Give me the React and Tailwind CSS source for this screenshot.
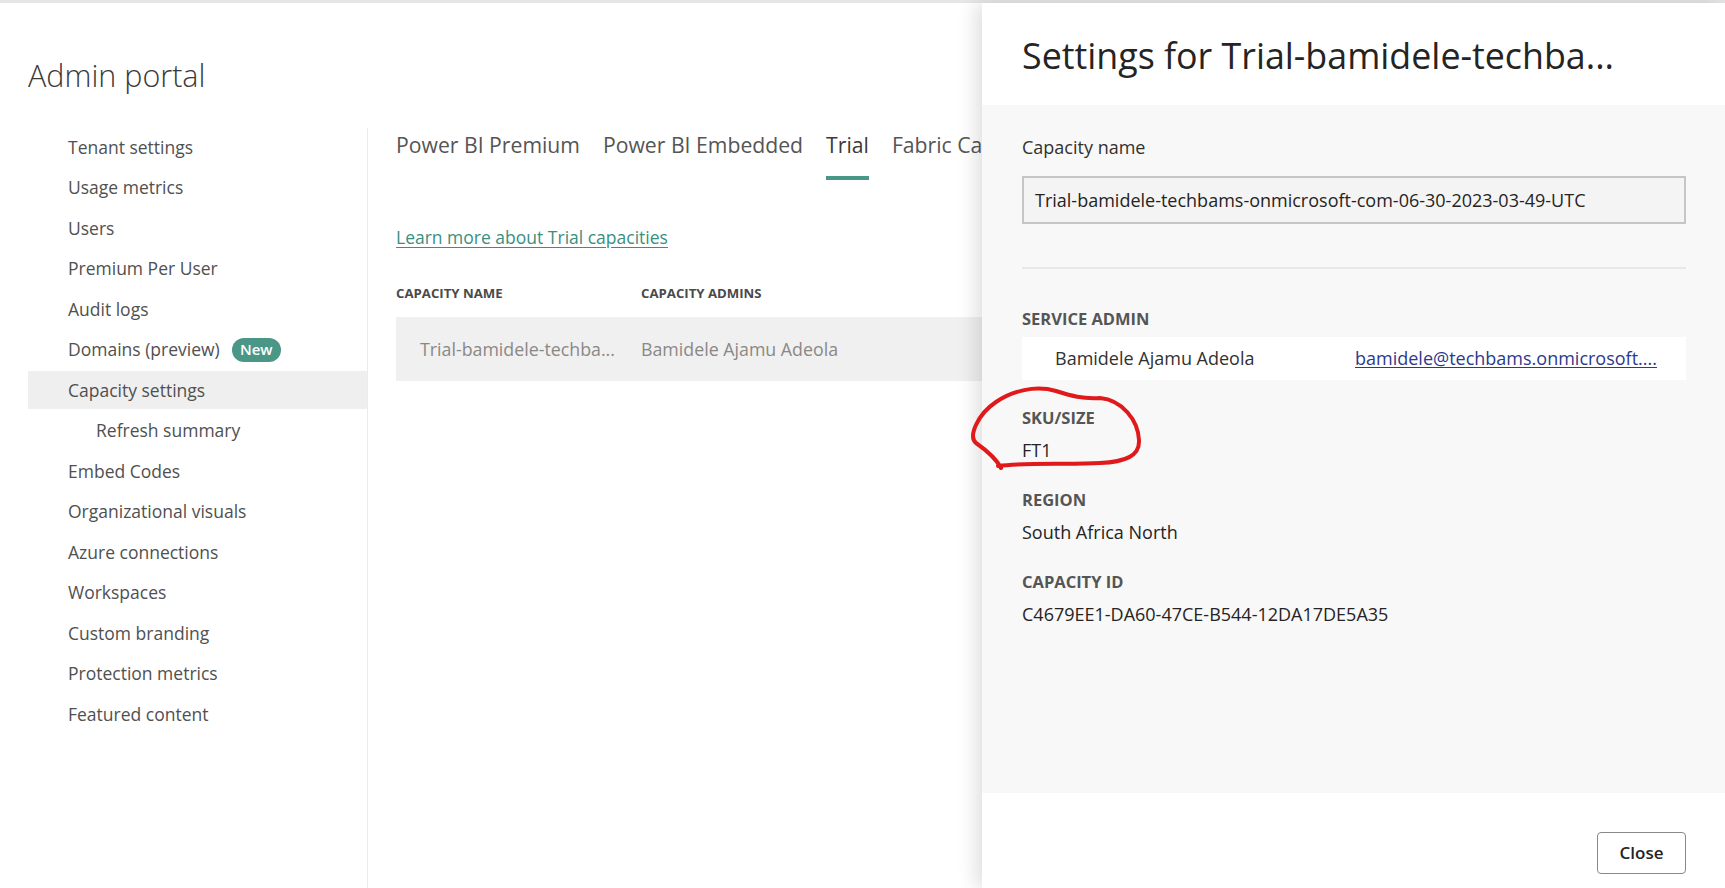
import React from 'react';

const navItems = [
  { label: 'Tenant settings' },
  { label: 'Usage metrics' },
  { label: 'Users' },
  { label: 'Premium Per User' },
  { label: 'Audit logs' },
  { label: 'Domains (preview)', badge: 'New' },
  { label: 'Capacity settings', active: true },
  { label: 'Refresh summary', sub: true },
  { label: 'Embed Codes' },
  { label: 'Organizational visuals' },
  { label: 'Azure connections' },
  { label: 'Workspaces' },
  { label: 'Custom branding' },
  { label: 'Protection metrics' },
  { label: 'Featured content' },
];

const tabs = ['Power BI Premium', 'Power BI Embedded', 'Trial', 'Fabric Capacity'];

const Field = ({ title, value }) => (
  <div className="mt-[28px]">
    <div className="text-[16.5px] leading-[20px] font-bold text-[#555555]">{title}</div>
    <div className="mt-[10px] text-[18px] leading-[24px] text-[#252423]">{value}</div>
  </div>
);

const App = () => {
  return (
    <div className="relative h-screen w-full overflow-hidden bg-white font-['Open_Sans',sans-serif]">
      <div className="h-[3px] bg-[#e6e6e6]" />

      {/* Page behind the side panel */}
      <div className="pt-[52px] pl-[28px]">
        <h1 className="text-[30.5px] leading-[40px] font-light text-[#3b3a39]">Admin portal</h1>
      </div>

      <div className="mt-[33px] flex h-full">
        <nav className="ml-[28px] w-[340px] shrink-0 border-r border-[#ebebeb] flex flex-col gap-[2.5px]">
          {navItems.map((item) => (
            <div
              key={item.label}
              className={`flex items-center h-[38px] text-[17.5px] text-[#505050] ${
                item.sub ? 'pl-[68px]' : 'pl-[40px]'
              } ${item.active ? 'bg-[#efefef]' : ''}`}
            >
              <span>{item.label}</span>
              {item.badge && (
                <span className="ml-[12px] flex items-center justify-center h-[24px] w-[49px] rounded-full bg-[#4a9687] text-white text-[15px] font-semibold">
                  {item.badge}
                </span>
              )}
            </div>
          ))}
        </nav>

        <main className="w-[614px] shrink-0 overflow-hidden pl-[28px]">
          <div className="flex gap-[23px] pt-[3px]">
            {tabs.map((t) => (
              <div key={t} className="flex flex-col shrink-0">
                <span
                  className={`text-[21.2px] leading-[28px] whitespace-nowrap ${
                    t === 'Trial' ? 'text-[#3b3a39]' : 'text-[#555555]'
                  }`}
                >
                  {t}
                </span>
                <div className={`mt-[17px] h-[4px] ${t === 'Trial' ? 'bg-[#4a9687]' : ''}`} />
              </div>
            ))}
          </div>

          <a className="mt-[45px] block w-max text-[17.5px] leading-[24px] text-[#3a8f80] underline underline-offset-[3px]">
            Learn more about Trial capacities
          </a>

          <div className="mt-[34px] flex text-[13.2px] leading-[20px] font-bold text-[#4a4a4a]">
            <div className="w-[245px]">CAPACITY NAME</div>
            <div>CAPACITY ADMINS</div>
          </div>

          <div className="mt-[14px] flex items-center h-[64px] bg-[#f0f0f0] text-[17.8px] text-[#8a8886] whitespace-nowrap">
            <div className="w-[245px] pl-[24px]">Trial-bamidele-techba...</div>
            <div>Bamidele Ajamu Adeola</div>
          </div>
        </main>
      </div>

      {/* Settings side panel */}
      <aside className="absolute top-[3px] right-0 bottom-0 w-[743px] flex flex-col bg-white shadow-[-6px_0_18px_rgba(0,0,0,0.13)]">
        <div className="h-[102px] shrink-0 pl-[40px] pt-[30px]">
          <h2 className="text-[35.8px] leading-[44px] text-[#252423] whitespace-nowrap">
            Settings for Trial-bamidele-techba...
          </h2>
        </div>

        <div className="flex-1 bg-[#f8f8f8] pl-[40px] pr-[39px] pt-[30px]">
          <div className="text-[18px] leading-[24px] text-[#323130]">Capacity name</div>
          <div className="mt-[17px] flex items-center h-[48px] border-2 border-[#c6c6c6] bg-[#f4f4f4] pl-[11px] text-[18px] text-[#252423]">
            Trial-bamidele-techbams-onmicrosoft-com-06-30-2023-03-49-UTC
          </div>

          <div className="mt-[43px] h-[2px] bg-[#e8e8e8]" />

          <div className="mt-[40px] text-[16.5px] leading-[20px] font-bold text-[#555555]">SERVICE ADMIN</div>
          <div className="mt-[8px] flex items-center h-[43px] bg-white text-[18px]">
            <div className="w-[333px] pl-[33px] text-[#323130]">Bamidele Ajamu Adeola</div>
            <a className="text-[#2d3a8c] underline underline-offset-[2px]">bamidele@techbams.onmicrosoft....</a>
          </div>

          <Field title="SKU/SIZE" value="FT1" />
          <Field title="REGION" value="South Africa North" />
          <Field title="CAPACITY ID" value="C4679EE1-DA60-47CE-B544-12DA17DE5A35" />
        </div>

        <div className="h-[95px] shrink-0 flex justify-end items-start pt-[39px] pr-[39px]">
          <button className="w-[89px] h-[42px] rounded-[4px] border border-[#8a8886] bg-white text-[17px] font-semibold text-[#252423]">
            Close
          </button>
        </div>
      </aside>

      {/* Hand-drawn red annotation */}
      <svg className="absolute inset-0 pointer-events-none" width="1725" height="888" viewBox="0 0 1725 888">
        <path
          d="M 1001 468 C 996 458, 986 450, 976 443 C 968 436, 978 414, 996 402 C 1012 391, 1035 385, 1056 391 C 1072 396, 1082 399, 1100 398 C 1122 400, 1138 420, 1139 440 C 1140 456, 1125 462, 1100 463 C 1070 465, 1030 462, 998 466"
          fill="none"
          stroke="#e0191b"
          strokeWidth="4"
          strokeLinecap="round"
          strokeLinejoin="round"
        />
      </svg>
    </div>
  );
};

export default App;
